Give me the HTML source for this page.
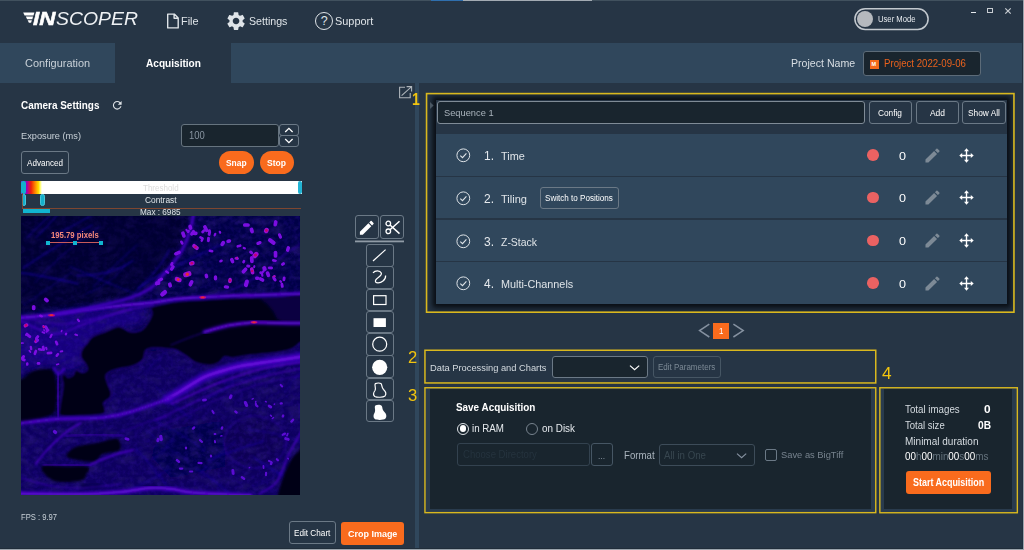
<!DOCTYPE html>
<html lang="en"><head><meta charset="utf-8"><title>Inscoper - Acquisition</title>
<style>
html,body{margin:0;padding:0;}
body{width:1024px;height:550px;overflow:hidden;background:#263545;position:relative;font-family:"Liberation Sans",sans-serif;color:#fff;}
.a{position:absolute;box-sizing:border-box;}
.t{position:absolute;white-space:nowrap;transform-origin:0 50%;line-height:1;}
.b{font-weight:700;}
.btn{position:absolute;box-sizing:border-box;border:1px solid #6b7986;border-radius:3px;}
.dk{background:#19252e;}
.yb{position:absolute;box-sizing:border-box;border:1px solid #d9b91c;}
svg{position:absolute;overflow:visible;}
</style></head><body>
<!-- TOPBAR -->
<div class="a" style="left:0;top:0;width:1024px;height:1px;background:#41515e"></div>
<div class="a" style="left:431px;top:0;width:32px;height:1px;background:#2f6fae"></div>
<div class="a" style="left:463px;top:0;width:129px;height:1px;background:#a3abb3"></div>
<svg style="left:0;top:0" width="60" height="40" viewBox="0 0 60 40"><g fill="#fff"><polygon points="23.2,12.4 34.4,12.4 33.5,15.4 24.6,15.4"></polygon><polygon points="25.8,16.4 33.1,16.4 32.3,19.2 27.1,19.2"></polygon><polygon points="27.7,20.2 31.9,20.2 31.1,22.8 28.9,22.8"></polygon></g></svg>
<div class="a" style="left:0;top:0;width:150px;height:40px"><span class="t b" style="left: 33.4px; font-style: italic; color: rgb(255, 255, 255); -webkit-text-stroke: 0.5px rgb(255, 255, 255); font-size: 17.5px; top: 11px; transform: scaleX(1.28);">IN</span><span class="t" style="left: 56px; font-style: italic; color: rgb(238, 241, 244); font-size: 17.5px; top: 11px; transform: scaleX(1.109);">SCOPER</span></div>

<svg style="left:166px;top:12px" width="14" height="18" viewBox="0 0 14 18"><path d="M1.7 2.1h6.6l3.9 3.9v9.9h-10.5z M8.1 2.1v4.1h4.1" fill="none" stroke="#dfe4e8" stroke-width="1.4" stroke-linejoin="round"></path></svg>
<span class="t" style="left: 181px; color: rgb(223, 228, 232); font-size: 10.49px; top: 17px; transform: scaleX(1.04);">File</span>
<svg style="left:225.4px;top:9.8px" width="22.1" height="22.1" viewBox="0 0 24 24"><path fill="#dfe4e8" d="M19.14 12.94c.04-.3.06-.61.06-.94 0-.32-.02-.64-.07-.94l2.03-1.58a.49.49 0 0 0 .12-.61l-1.92-3.32a.488.488 0 0 0-.59-.22l-2.39.96c-.5-.38-1.03-.7-1.62-.94l-.36-2.54a.484.484 0 0 0-.48-.41h-3.84c-.24 0-.43.17-.47.41l-.36 2.54c-.59.24-1.13.57-1.62.94l-2.39-.96c-.22-.08-.47 0-.59.22L2.74 8.87c-.12.21-.08.47.12.61l2.03 1.58c-.05.3-.09.63-.09.94s.02.64.07.94l-2.03 1.58a.49.49 0 0 0-.12.61l1.92 3.32c.12.22.37.29.59.22l2.39-.96c.5.38 1.03.7 1.62.94l.36 2.54c.05.24.24.41.48.41h3.84c.24 0 .44-.17.47-.41l.36-2.54c.59-.24 1.13-.56 1.62-.94l2.39.96c.22.08.47 0 .59-.22l1.92-3.32c.12-.22.07-.47-.12-.61l-2.01-1.58zM12 15.6c-1.98 0-3.6-1.620-3.6-3.600s1.620-3.600 3.600-3.600 3.600 1.620 3.600 3.600-1.620 3.600-3.600 3.600z"></path></svg>
<span class="t" style="left: 249.2px; color: rgb(223, 228, 232); font-size: 10.22px; top: 17px; transform: scaleX(1.04);">Settings</span>
<div class="a" style="left:315px;top:12px;width:18px;height:18px;border:1px solid #dfe4e8;border-radius:50%"></div>
<span class="t" style="left:320.8px;top:14.6px;font-size:12.5px;color:#dfe4e8">?</span>
<span class="t" style="left: 335.2px; color: rgb(223, 228, 232); font-size: 10.49px; top: 17px; transform: scaleX(1.04);">Support</span>
<svg style="left:853px;top:7px" width="77" height="24" viewBox="0 0 77 24"><rect x="1.900" y="1.800" width="73.200" height="20.600" rx="10.300" fill="none" stroke="#c3c9cf" stroke-width="1.500"></rect></svg>
<div class="a" style="left:857.3px;top:11px;width:16px;height:16px;border-radius:50%;background:#b5b9be"></div>
<span class="t" style="left: 877.5px; color: rgb(230, 234, 238); font-size: 8.16px; top: 16px; transform: scaleX(0.94);">User Mode</span>
<div class="a" style="left:970.5px;top:12px;width:5px;height:1.2px;background:#e6eaee"></div>
<div class="a" style="left:987px;top:7.800px;width:6.200px;height:5px;border:1px solid #c8cdd2;border-top-width:1.800px"></div>
<svg style="left:1005px;top:7.5px" width="6" height="6" viewBox="0 0 6 6"><path d="M0.300 0.300L5.700 5.700M5.700 0.300L0.300 5.700" stroke="#c8cdd2" stroke-width="1.200"></path></svg>

<!-- TABBAR -->
<div class="a" style="left:0;top:43px;width:1024px;height:40px;background:#30475c"></div>
<div class="a" style="left:115px;top:43px;width:116px;height:40px;background:#263545"></div>
<span class="t" style="left: 24.8px; color: rgb(201, 209, 216); font-size: 11.66px; top: 57px; transform: scaleX(0.94);">Configuration</span>
<span class="t b" style="left: 145.6px; color: rgb(255, 255, 255); font-size: 11.48px; top: 58px; transform: scaleX(0.88);">Acquisition</span>
<span class="t" style="left: 790.8px; color: rgb(217, 223, 228); font-size: 10.29px; top: 59px; transform: scaleX(1.03);">Project Name</span>
<div class="a dk" style="left:863px;top:51px;width:118px;height:25px;border:1px solid #5c6b78;border-radius:3px"></div>
<div class="a" style="left:869.5px;top:59.5px;width:9.5px;height:9.5px;background:#f26a1b"></div>
<span class="t b" style="left:871.6px;top:61.6px;font-size:5.5px;color:#fff">M</span>
<span class="t" style="left: 883.6px; color: rgb(233, 98, 29); font-size: 10.26px; top: 59px; transform: scaleX(0.94);">Project 2022-09-06</span>

<!-- LEFT PANEL -->
<span class="t b" style="left: 21px; color: rgb(255, 255, 255); font-size: 11.3px; top: 100px; transform: scaleX(0.88);">Camera Settings</span>
<svg style="left:112px;top:100.3px" width="10.5" height="10.5" viewBox="0 0 24 24"><path fill="#dfe4e8" d="M17.65 6.35A7.958 7.958 0 0 0 12 4c-4.42 0-7.990 3.580-7.990 8s3.570 8 7.990 8c3.730 0 6.840-2.550 7.730-6h-2.080A5.990 5.990 0 0 1 12 18c-3.310 0-6-2.690-6-6s2.690-6 6-6c1.660 0 3.140.69 4.220 1.780L13 11h7V4l-2.350 2.350z" transform="translate(12 12) scale(1.25) translate(-12 -12)"></path></svg>
<span class="t" style="left: 21px; color: rgb(201, 209, 216); font-size: 9.82px; top: 131px; transform: scaleX(0.94);">Exposure (ms)</span>
<div class="a dk" style="left:181px;top:124px;width:98px;height:23px;border:1px solid #66747f;border-radius:3px"></div>
<span class="t" style="left: 188.6px; color: rgb(135, 148, 160); font-size: 10.07px; top: 131px; transform: scaleX(0.94);">100</span>
<div class="btn" style="left:279px;top:124px;width:20px;height:12px"></div>
<div class="btn" style="left:279px;top:135px;width:20px;height:12px"></div>
<svg style="left:279px;top:124px" width="20" height="23" viewBox="0 0 20 23"><path d="M6.2 8L9.9 4.3L13.6 8M6.2 15L9.9 18.7L13.6 15" fill="none" stroke="#fff" stroke-width="1.3"></path></svg>
<div class="btn" style="left:21px;top:151px;width:47.5px;height:22.5px"></div>
<span class="t" style="left: 27px; color: rgb(255, 255, 255); font-size: 8.61px; top: 159px; transform: scaleX(0.94);">Advanced</span>
<div class="a" style="left:218.5px;top:151px;width:35px;height:23px;border-radius:11.5px;background:#f96b1d"></div>
<span class="t b" style="left: 225.8px; color: rgb(255, 255, 255); font-size: 9.57px; top: 158px; transform: scaleX(0.88);">Snap</span>
<div class="a" style="left:259.5px;top:151px;width:34.5px;height:23px;border-radius:11.5px;background:#f96b1d"></div>
<span class="t b" style="left: 267.3px; color: rgb(255, 255, 255); font-size: 9.72px; top: 158px; transform: scaleX(0.88);">Stop</span>
<!-- threshold -->
<div class="a" style="left:21px;top:181px;width:281px;height:12.5px;background:linear-gradient(90deg,#7a10d8 0,#8c00cc 5px,#c80870 7.500px,#ee2008 10px,#ff8400 14px,#ffdc00 17.500px,#ffff80 19.500px,#fff 21px,#fff 100%)"></div>
<span class="t" style="left: 143.2px; color: rgb(220, 220, 220); font-size: 8.52px; top: 184px; transform: scaleX(0.94);">Threshold</span>
<div class="a" style="left:21.400px;top:181px;width:4.200px;height:13px;border-radius:2.100px;background:#12b0cc"></div>
<div class="a" style="left:298px;top:181px;width:4px;height:13px;border-radius:2px;background:#22b4d4"></div>
<span class="t" style="left: 145.2px; color: rgb(223, 228, 232); font-size: 8.89px; top: 196px; transform: scaleX(0.94);">Contrast</span>
<div class="a" style="left:21.500px;top:194px;width:4.400px;height:12.400px;border-radius:2.200px;background:#14b0cc;border:1px solid #48c4da"></div>
<div class="a" style="left:40.300px;top:194px;width:4.400px;height:12.400px;border-radius:2.200px;background:#14b0cc;border:1px solid #48c4da"></div>
<div class="a" style="left:21.500px;top:208px;width:279px;height:1px;background:#7e4630"></div>
<div class="a" style="left:21.500px;top:193px;width:1px;height:16px;background:#8f4a2e;opacity:.75"></div>
<div class="a" style="left:23px;top:209px;width:26.5px;height:4px;background:#11b5d0"></div>
<span class="t" style="left: 140.3px; color: rgb(223, 228, 232); font-size: 8.73px; top: 208px; transform: scaleX(0.94);">Max : 6985</span>
<svg style="left:21px;top:216px;overflow:hidden" width="279" height="279" viewBox="0 0 279 279">
<defs>
<filter id="b1" x="-20%" y="-20%" width="140%" height="140%"><feGaussianBlur stdDeviation="0.85"></feGaussianBlur></filter>
<filter id="b2" x="-20%" y="-20%" width="140%" height="140%"><feGaussianBlur stdDeviation="1.6"></feGaussianBlur></filter>
<filter id="b4" x="-30%" y="-30%" width="160%" height="160%"><feGaussianBlur stdDeviation="4"></feGaussianBlur></filter>
<filter id="nz" x="0" y="0" width="100%" height="100%"><feTurbulence type="fractalNoise" baseFrequency="0.22" numOctaves="3" seed="4"></feTurbulence><feColorMatrix type="matrix" values="0 0 0 0 0.07  0 0 0 0 0.01  0 0 0 0 0.72  2.8 0 0 0 -1.1"></feColorMatrix></filter>
<filter id="nz2" x="0" y="0" width="100%" height="100%"><feTurbulence type="turbulence" baseFrequency="0.06 0.1" numOctaves="2" seed="9"></feTurbulence><feColorMatrix type="matrix" values="0 0 0 0 0.02  0 0 0 0 0.01  0 0 0 0 0.16  0 2.2 0 0 -0.35"></feColorMatrix></filter>
<clipPath id="cp"><rect width="279" height="279"></rect></clipPath>
</defs>
<g clip-path="url(#cp)">
<rect width="279" height="279" fill="#040042"></rect>
<g filter="url(#b4)">
<path d="M-10.0 -10.0L172.0 -10.0L165.0 25.0L150.0 50.0L128.0 72.0L100.0 85.0L60.0 93.0L-10.0 100.0Z" fill="#020030"></path>
<path d="M176.0 -10.0L290.0 -10.0L290.0 78.0L211.0 78.0L156.0 81.0L132.0 86.0L132.0 74.0L153.0 52.0L168.0 27.0Z" fill="#050046"></path>
<path d="M-10.0 102.0L60.0 95.0L127.0 88.0L127.0 94.0L122.0 109.0L97.0 115.0L76.0 120.0L66.0 140.0L62.0 152.0L45.0 158.0L33.0 150.0L10.0 154.0L-10.0 160.0Z" fill="#12007e"></path>
<path d="M-10.0 206.0L36.0 204.0L82.0 202.0L84.0 160.0L94.0 154.0L112.0 150.0L125.0 135.0L148.0 133.0L170.0 141.0L176.0 148.0L193.0 149.0L204.0 141.0L238.0 139.0L271.0 133.0L290.0 124.0L290.0 290.0L-10.0 290.0Z" fill="#08005e"></path>
<ellipse cx="234" cy="226" rx="30" ry="25" fill="#070054"></ellipse>
<path d="M140.0 215.0L200.0 205.0L205.0 250.0L150.0 262.0L130.0 240.0Z" fill="#06004c"></path>
</g>
<rect width="279" height="279" filter="url(#nz2)" opacity="0.5"></rect>
<rect width="279" height="279" filter="url(#nz)" opacity="0.14"></rect>
<path d="M-10.0 -10.0L165.0 -10.0L158.0 25.0L143.0 48.0L122.0 68.0L95.0 80.0L55.0 88.0L-10.0 94.0Z" fill="#020030" opacity="0.5" filter="url(#b4)"></path>
<path d="M48.8 50.4Q82.5 65.7 115.8 78.2" fill="none" stroke="#1402a0" stroke-width="1.2" opacity="0.53" filter="url(#b1)"></path>
<path d="M71.9 71.4Q87.4 55.0 115.9 28.8" fill="none" stroke="#1402a0" stroke-width="1.7" opacity="0.36" filter="url(#b1)"></path>
<path d="M117.7 86.8Q153.7 79.7 200.8 88.1" fill="none" stroke="#1402a0" stroke-width="1.5" opacity="0.37" filter="url(#b1)"></path>
<path d="M14.7 21.8Q37.5 -0.2 62.1 -33.0" fill="none" stroke="#1402a0" stroke-width="1.5" opacity="0.57" filter="url(#b1)"></path>
<path d="M55.0 59.6Q91.7 59.9 112.4 44.3" fill="none" stroke="#1402a0" stroke-width="1.8" opacity="0.60" filter="url(#b1)"></path>
<path d="M31.0 20.7Q55.0 8.4 70.5 -0.7" fill="none" stroke="#1402a0" stroke-width="1.8" opacity="0.49" filter="url(#b1)"></path>
<path d="M114.5 76.3Q138.1 54.4 148.6 33.5" fill="none" stroke="#1402a0" stroke-width="2.0" opacity="0.49" filter="url(#b1)"></path>
<path d="M-0.5 56.7Q21.8 59.5 57.3 67.8" fill="none" stroke="#1402a0" stroke-width="2.0" opacity="0.62" filter="url(#b1)"></path>
<path d="M5.3 22.2Q26.1 1.8 37.4 -8.2" fill="none" stroke="#1402a0" stroke-width="1.6" opacity="0.51" filter="url(#b1)"></path>
<path d="M14.8 65.9Q40.7 36.7 78.9 10.0" fill="none" stroke="#1402a0" stroke-width="1.2" opacity="0.44" filter="url(#b1)"></path>
<path d="M116.2 72.3Q156.9 47.3 206.9 25.8" fill="none" stroke="#1402a0" stroke-width="1.9" opacity="0.57" filter="url(#b1)"></path>
<path d="M3.0 89.0Q31.3 69.9 50.9 56.2" fill="none" stroke="#1402a0" stroke-width="1.3" opacity="0.38" filter="url(#b1)"></path>
<path d="M1.7 52.4Q34.4 29.9 71.3 8.9" fill="none" stroke="#1402a0" stroke-width="2.0" opacity="0.52" filter="url(#b1)"></path>
<path d="M64.7 78.0Q91.5 67.8 105.3 47.5" fill="none" stroke="#1402a0" stroke-width="1.2" opacity="0.42" filter="url(#b1)"></path>
<path d="M232.4 271.3Q261.7 257.5 281.9 241.2" fill="none" stroke="#1c04a8" stroke-width="1.4" opacity="0.33" filter="url(#b1)"></path>
<path d="M106.9 274.2Q125.5 267.1 149.9 252.3" fill="none" stroke="#1c04a8" stroke-width="1.6" opacity="0.39" filter="url(#b1)"></path>
<path d="M131.4 242.9Q142.5 236.9 152.2 222.5" fill="none" stroke="#1c04a8" stroke-width="1.6" opacity="0.38" filter="url(#b1)"></path>
<path d="M264.2 176.3Q273.5 159.3 284.0 152.8" fill="none" stroke="#1c04a8" stroke-width="1.2" opacity="0.41" filter="url(#b1)"></path>
<path d="M202.4 167.0Q235.2 162.0 256.4 153.3" fill="none" stroke="#1c04a8" stroke-width="1.7" opacity="0.48" filter="url(#b1)"></path>
<path d="M125.1 154.5Q145.8 138.6 161.6 111.5" fill="none" stroke="#1c04a8" stroke-width="1.0" opacity="0.49" filter="url(#b1)"></path>
<path d="M186.3 244.2Q209.6 235.2 243.1 225.0" fill="none" stroke="#1c04a8" stroke-width="1.7" opacity="0.57" filter="url(#b1)"></path>
<path d="M231.9 240.8Q254.6 257.3 280.8 269.3" fill="none" stroke="#1c04a8" stroke-width="1.9" opacity="0.56" filter="url(#b1)"></path>
<path d="M174.7 252.0Q193.2 263.6 208.7 278.1" fill="none" stroke="#1c04a8" stroke-width="1.6" opacity="0.48" filter="url(#b1)"></path>
<path d="M114.4 232.5Q134.5 252.6 149.2 275.3" fill="none" stroke="#1c04a8" stroke-width="1.7" opacity="0.47" filter="url(#b1)"></path>
<path d="M178.9 258.1Q191.5 242.3 215.5 224.1" fill="none" stroke="#1c04a8" stroke-width="1.5" opacity="0.37" filter="url(#b1)"></path>
<path d="M225.0 214.1Q249.9 214.1 280.6 225.8" fill="none" stroke="#1c04a8" stroke-width="1.3" opacity="0.50" filter="url(#b1)"></path>
<path d="M136.3 171.9Q152.8 192.1 170.8 202.8" fill="none" stroke="#1c04a8" stroke-width="1.3" opacity="0.50" filter="url(#b1)"></path>
<path d="M135.5 205.6Q164.2 219.0 183.7 235.2" fill="none" stroke="#1c04a8" stroke-width="1.6" opacity="0.39" filter="url(#b1)"></path>
<path d="M124.4 214.0Q149.1 234.8 168.7 244.8" fill="none" stroke="#1c04a8" stroke-width="1.3" opacity="0.35" filter="url(#b1)"></path>
<path d="M180.7 185.5Q198.1 176.4 212.5 167.5" fill="none" stroke="#1c04a8" stroke-width="1.3" opacity="0.55" filter="url(#b1)"></path>
<g filter="url(#b1)" fill="#030119">
<path d="M129.8 91.5C131.6 89.9 137.6 89.0 142.0 88.0C146.4 87.0 149.7 86.1 156.3 85.4C162.9 84.7 172.6 84.3 181.7 83.7C190.8 83.1 201.8 82.4 210.8 82.0C219.9 81.6 227.8 81.5 236.0 81.2C244.2 81.0 251.8 80.8 260.0 80.5C268.2 80.2 280.8 72.2 285.0 79.5C289.2 86.8 286.0 116.1 285.0 124.0C284.0 131.9 281.3 125.5 279.0 127.0C276.7 128.5 274.8 131.4 271.0 133.0C267.2 134.6 261.5 135.8 256.0 136.7C250.5 137.6 243.4 137.9 238.0 138.5C232.6 139.1 228.0 139.4 223.5 140.0C219.0 140.6 214.3 141.8 211.0 142.0C207.7 142.2 205.7 140.2 203.5 141.0C201.3 141.8 200.4 145.3 198.0 146.7C195.6 148.1 192.9 149.5 189.0 149.5C185.1 149.5 178.5 148.3 174.5 146.7C170.5 145.1 168.1 142.0 165.0 140.0C161.9 138.0 158.9 135.7 156.0 134.5C153.1 133.3 151.5 133.4 147.6 133.0C143.7 132.6 136.1 131.9 132.3 132.2C128.5 132.5 126.4 132.8 124.7 134.7C123.0 136.6 124.3 141.0 122.2 143.6C120.1 146.2 116.7 148.3 112.0 150.0C107.3 151.7 98.7 152.3 94.2 153.8C89.8 155.3 86.6 156.8 85.3 158.9C84.0 161.0 85.7 163.5 86.5 166.5C87.3 169.5 90.0 174.1 90.4 176.7C90.8 179.2 90.3 180.1 89.0 181.8C87.7 183.5 83.5 185.2 82.7 186.9C81.9 188.6 84.2 190.1 84.0 192.0C83.8 193.9 86.9 197.0 81.4 198.4C75.9 199.8 58.0 200.4 50.9 200.6C43.8 200.8 40.9 201.0 38.9 199.6C36.9 198.2 38.4 195.0 38.6 192.0C38.8 189.0 39.6 185.6 40.2 181.8C40.8 178.0 41.9 172.4 42.0 169.0C42.1 165.6 40.5 163.3 40.7 161.4C40.9 159.5 42.2 157.6 43.3 157.6C44.3 157.6 45.5 161.2 47.0 161.4C48.5 161.6 50.9 160.2 52.2 158.9C53.5 157.6 53.2 154.2 54.7 153.8C56.2 153.4 59.1 156.4 61.0 156.4C62.9 156.4 65.5 155.1 66.2 153.8C66.9 152.5 66.0 150.8 64.9 148.7C63.8 146.6 60.4 143.6 59.8 141.0C59.1 138.4 59.9 135.7 61.0 133.4C62.1 131.1 64.5 129.1 66.2 127.0C67.9 124.9 68.3 122.6 71.3 120.7C74.3 118.8 79.8 117.3 84.0 115.6C88.2 113.9 93.7 111.1 96.7 110.5C99.7 109.9 99.7 111.0 101.8 111.8C103.9 112.6 106.4 115.2 109.4 115.6C112.4 116.0 116.8 115.7 119.6 114.4C122.4 113.1 124.1 110.8 126.0 108.0C127.9 105.2 130.4 100.5 131.0 97.8C131.6 95.0 128.0 93.1 129.8 91.5Z"></path>
<path d="M-3.0 169.0C-1.9 161.6 1.2 163.7 3.8 161.4C6.4 159.1 9.1 156.3 12.7 155.0C16.3 153.7 22.3 153.3 25.5 153.3C28.7 153.3 30.3 153.2 31.8 155.0C33.3 156.8 33.8 160.4 34.4 164.0C35.0 167.6 35.6 172.5 35.6 176.7C35.6 180.9 35.0 186.3 34.6 189.4C34.2 192.5 34.7 193.7 33.5 195.5C32.3 197.3 30.5 198.6 27.3 200.0C24.1 201.4 19.6 203.1 14.5 204.0C9.4 204.9 -0.1 211.4 -3.0 205.6C-5.9 199.8 -4.1 176.4 -3.0 169.0Z"></path>
<path d="M45.5 240.0C45.5 237.9 49.4 233.2 54.5 231.0C59.6 228.8 69.3 228.4 76.0 227.0C82.7 225.6 90.7 222.7 94.5 222.7C98.3 222.7 98.4 225.0 99.0 227.0C99.6 229.0 100.8 232.7 98.0 234.5C95.2 236.3 86.2 236.2 82.0 238.0C77.8 239.8 77.3 244.6 72.7 245.5C68.1 246.4 59.0 244.5 54.5 243.6C50.0 242.7 45.5 242.1 45.5 240.0Z"></path>
<path d="M22.0 250.0C25.6 248.8 37.5 250.3 45.0 250.5C52.5 250.7 63.6 249.8 67.0 251.0C70.4 252.2 66.7 255.8 65.5 258.0C64.3 260.2 64.9 263.2 60.0 264.5C55.1 265.8 42.1 266.6 36.0 265.5C29.9 264.4 25.9 260.6 23.6 258.0C21.3 255.4 18.4 251.2 22.0 250.0Z"></path>
<path d="M258.0 285.0C254.2 281.2 260.0 268.8 262.0 262.0C264.0 255.2 267.5 248.3 270.0 244.0C272.5 239.7 274.5 238.3 277.0 236.0C279.5 233.7 283.7 221.8 285.0 230.0C286.3 238.2 289.5 275.8 285.0 285.0C280.5 294.2 261.8 288.8 258.0 285.0Z"></path>
</g>
<path d="M238.0 82.0L285.0 80.0L285.0 106.0L262.0 106.0L256.0 103.0L252.0 95.0L246.0 88.0Z" fill="#08004a" opacity="0.85" filter="url(#b2)"></path>
<path d="M60.0 268.0L80.0 268.0L80.0 273.0L60.0 273.0Z" fill="#06003c" opacity="0.7" filter="url(#b2)"></path>
<path d="M-2.0 102.0C3.3 101.5 19.2 100.3 30.0 99.0C40.8 97.7 51.3 95.9 63.0 94.3C74.7 92.7 89.0 90.7 100.0 89.5C111.0 88.3 119.7 88.1 129.0 87.0C138.3 85.9 147.2 84.0 156.0 83.0C164.8 82.0 172.8 81.8 182.0 81.3C191.2 80.8 201.7 80.0 211.0 79.7C220.3 79.4 226.2 79.6 238.0 79.2C249.8 78.8 274.7 77.9 282.0 77.6" fill="none" stroke="#3206b4" stroke-width="4.5" opacity="0.55" filter="url(#b2)" stroke-linecap="round"></path>
<path d="M-2.0 102.0C3.3 101.5 19.2 100.3 30.0 99.0C40.8 97.7 51.3 95.9 63.0 94.3C74.7 92.7 89.0 90.7 100.0 89.5C111.0 88.3 119.7 88.1 129.0 87.0C138.3 85.9 147.2 84.0 156.0 83.0C164.8 82.0 172.8 81.8 182.0 81.3C191.2 80.8 201.7 80.0 211.0 79.7C220.3 79.4 226.2 79.6 238.0 79.2C249.8 78.8 274.7 77.9 282.0 77.6" fill="none" stroke="#6c0ce0" stroke-width="2.1" opacity="1.00" filter="url(#b1)" stroke-linecap="round"></path>
<path d="M-2.0 104.0C3.8 106.3 22.1 117.3 33.0 118.0C43.9 118.7 52.1 111.8 63.6 108.0C75.1 104.2 90.4 98.5 101.8 95.3C113.2 92.1 127.0 90.0 132.0 89.0" fill="none" stroke="#4a06c6" stroke-width="1.4" opacity="0.90" filter="url(#b1)" stroke-linecap="round"></path>
<path d="M-2.0 100.0C5.0 101.3 26.3 107.8 40.0 108.0C53.7 108.2 68.3 103.5 80.0 101.0C91.7 98.5 105.0 94.3 110.0 93.0" fill="none" stroke="#4a06c6" stroke-width="1.2" opacity="0.70" filter="url(#b1)" stroke-linecap="round"></path>
<path d="M183.5 116.0C187.1 115.0 197.8 111.5 205.0 110.0C212.2 108.5 222.3 107.5 227.0 106.9C231.7 106.3 228.2 106.3 233.0 106.3C237.8 106.3 247.8 106.8 256.0 106.9C264.2 107.1 277.7 107.2 282.0 107.2" fill="none" stroke="#3206b4" stroke-width="5.0" opacity="0.55" filter="url(#b2)" stroke-linecap="round"></path>
<path d="M183.5 116.0C187.1 115.0 197.8 111.5 205.0 110.0C212.2 108.5 222.3 107.5 227.0 106.9C231.7 106.3 228.2 106.3 233.0 106.3C237.8 106.3 247.8 106.8 256.0 106.9C264.2 107.1 277.7 107.2 282.0 107.2" fill="none" stroke="#6a0ade" stroke-width="2.0" opacity="1.00" filter="url(#b1)" stroke-linecap="round"></path>
<path d="M150.0 129.0C153.3 127.7 164.0 123.2 170.0 121.0C176.0 118.8 183.3 116.4 186.0 115.5" fill="none" stroke="#2a02a0" stroke-width="1.0" opacity="0.80" filter="url(#b1)" stroke-linecap="round"></path>
<path d="M172.6 -2.0C172.0 0.8 170.8 8.7 169.0 14.5C167.2 20.3 164.7 27.0 161.7 32.7C158.7 38.5 154.8 43.9 150.8 49.0C146.9 54.1 141.6 59.6 138.0 63.6C134.4 67.5 133.8 69.6 129.0 72.7C124.2 75.8 118.4 79.0 109.0 82.0C99.6 85.0 84.9 88.3 72.7 91.0C60.5 93.7 42.1 96.8 36.0 98.0" fill="none" stroke="#2a04a4" stroke-width="5.0" opacity="0.50" filter="url(#b2)" stroke-linecap="round"></path>
<path d="M172.6 -2.0C172.0 0.8 170.8 8.7 169.0 14.5C167.2 20.3 164.7 27.0 161.7 32.7C158.7 38.5 154.8 43.9 150.8 49.0C146.9 54.1 141.6 59.6 138.0 63.6C134.4 67.5 133.8 69.6 129.0 72.7C124.2 75.8 118.4 79.0 109.0 82.0C99.6 85.0 84.9 88.3 72.7 91.0C60.5 93.7 42.1 96.8 36.0 98.0" fill="none" stroke="#4a06c6" stroke-width="2.0" opacity="0.95" filter="url(#b1)" stroke-linecap="round"></path>
<path d="M279.0 28.0C276.2 30.0 268.5 35.0 262.0 40.0C255.5 45.0 247.8 52.7 240.0 58.0C232.2 63.3 223.3 68.3 215.0 72.0C206.7 75.7 194.2 78.7 190.0 80.0" fill="none" stroke="#3404b0" stroke-width="1.2" opacity="0.70" filter="url(#b1)" stroke-linecap="round"></path>
<path d="M146.0 183.0C148.3 181.7 153.8 178.7 160.0 175.0C166.2 171.3 175.8 164.6 183.5 161.0C191.2 157.4 199.9 155.3 206.0 153.5C212.1 151.7 211.7 151.5 220.0 150.0C228.3 148.5 245.7 146.1 256.0 144.5C266.3 142.9 277.7 141.2 282.0 140.5" fill="none" stroke="#3606b8" stroke-width="10.0" opacity="0.80" filter="url(#b2)" stroke-linecap="round"></path>
<path d="M146.0 183.0C148.3 181.7 153.8 178.7 160.0 175.0C166.2 171.3 175.8 164.6 183.5 161.0C191.2 157.4 199.9 155.3 206.0 153.5C212.1 151.7 211.7 151.5 220.0 150.0C228.3 148.5 245.7 146.1 256.0 144.5C266.3 142.9 277.7 141.2 282.0 140.5" fill="none" stroke="#6a0ade" stroke-width="3.2" opacity="1.00" filter="url(#b1)" stroke-linecap="round"></path>
<path d="M150.0 188.0C153.3 186.5 161.7 182.7 170.0 179.0C178.3 175.3 188.3 170.3 200.0 166.0C211.7 161.7 226.3 156.3 240.0 153.0C253.7 149.7 275.0 147.2 282.0 146.0" fill="none" stroke="#5808d2" stroke-width="1.5" opacity="0.90" filter="url(#b1)" stroke-linecap="round"></path>
<path d="M135.0 204.0C140.0 201.7 153.3 195.3 165.0 190.0C176.7 184.7 191.7 177.0 205.0 172.0C218.3 167.0 232.2 163.3 245.0 160.0C257.8 156.7 275.8 153.3 282.0 152.0" fill="none" stroke="#4a06c6" stroke-width="1.3" opacity="0.80" filter="url(#b1)" stroke-linecap="round"></path>
<path d="M129.0 214.0C134.2 211.8 148.2 206.3 160.0 201.0C171.8 195.7 186.7 187.5 200.0 182.0C213.3 176.5 226.3 171.8 240.0 168.0C253.7 164.2 275.0 160.5 282.0 159.0" fill="none" stroke="#3a04b8" stroke-width="1.0" opacity="0.70" filter="url(#b1)" stroke-linecap="round"></path>
<path d="M-2.0 207.4C4.3 206.7 22.0 204.0 36.0 203.0C50.0 202.0 69.8 202.6 82.0 201.4C94.2 200.2 97.7 199.2 109.0 196.0C120.3 192.8 143.2 184.3 150.0 182.0" fill="none" stroke="#3004b0" stroke-width="5.0" opacity="0.60" filter="url(#b2)" stroke-linecap="round"></path>
<path d="M-2.0 207.4C4.3 206.7 22.0 204.0 36.0 203.0C50.0 202.0 69.8 202.6 82.0 201.4C94.2 200.2 97.7 199.2 109.0 196.0C120.3 192.8 143.2 184.3 150.0 182.0" fill="none" stroke="#5608d0" stroke-width="2.0" opacity="1.00" filter="url(#b1)" stroke-linecap="round"></path>
<path d="M37.6 157.0C37.5 159.2 37.3 165.3 37.2 170.0C37.1 174.7 36.9 179.8 37.0 185.0C37.1 190.2 37.5 198.3 37.6 201.0" fill="none" stroke="#4a06c6" stroke-width="1.8" opacity="1.00" filter="url(#b1)" stroke-linecap="round"></path>
<path d="M33.0 152.0C33.8 153.0 35.8 157.8 37.5 158.0C39.2 158.2 42.1 153.8 43.0 153.0" fill="none" stroke="#3a04b8" stroke-width="3.0" opacity="0.90" filter="url(#b1)" stroke-linecap="round"></path>
<path d="M-2.0 277.5C8.3 277.6 43.0 278.4 60.0 278.2C77.0 277.9 88.5 277.0 100.0 276.0C111.5 275.0 120.5 272.5 129.0 272.0C137.5 271.5 143.7 272.2 151.0 273.0C158.3 273.8 159.4 275.5 172.6 276.6C185.8 277.7 220.4 279.0 230.0 279.5" fill="none" stroke="#3004b0" stroke-width="6.0" opacity="0.60" filter="url(#b2)" stroke-linecap="round"></path>
<path d="M-2.0 277.5C8.3 277.6 43.0 278.4 60.0 278.2C77.0 277.9 88.5 277.0 100.0 276.0C111.5 275.0 120.5 272.5 129.0 272.0C137.5 271.5 143.7 272.2 151.0 273.0C158.3 273.8 159.4 275.5 172.6 276.6C185.8 277.7 220.4 279.0 230.0 279.5" fill="none" stroke="#640ad8" stroke-width="2.4" opacity="1.00" filter="url(#b1)" stroke-linecap="round"></path>
<path d="M14.5 248.0C16.6 245.5 21.8 238.3 27.0 233.0C32.2 227.7 40.0 220.3 45.5 216.0C51.0 211.7 57.6 208.5 60.0 207.0" fill="none" stroke="#4a06c6" stroke-width="1.6" opacity="0.95" filter="url(#b1)" stroke-linecap="round"></path>
<path d="M22.0 248.6C25.8 248.7 37.2 248.8 45.0 249.0C52.8 249.2 65.0 249.5 69.0 249.6" fill="none" stroke="#4a06c6" stroke-width="1.3" opacity="0.90" filter="url(#b1)" stroke-linecap="round"></path>
<path d="M45.0 220.0C49.7 219.7 63.5 218.5 73.0 218.4C82.5 218.3 97.2 219.2 102.0 219.4" fill="none" stroke="#4a06c6" stroke-width="1.3" opacity="0.85" filter="url(#b1)" stroke-linecap="round"></path>
<path d="M0.0 262.0C5.0 263.3 20.0 268.3 30.0 270.0C40.0 271.7 48.3 272.3 60.0 272.0C71.7 271.7 93.3 268.7 100.0 268.0" fill="none" stroke="#3a04b8" stroke-width="1.2" opacity="0.80" filter="url(#b1)" stroke-linecap="round"></path>
<path d="M69.0 249.0C70.8 248.2 75.5 245.8 80.0 244.0C84.5 242.2 90.7 239.7 96.0 238.0C101.3 236.3 109.3 234.7 112.0 234.0" fill="none" stroke="#4a06c6" stroke-width="2.2" opacity="0.85" filter="url(#b1)" stroke-linecap="round"></path>
<path d="M282.0 213.0C279.7 217.2 271.5 231.0 268.0 238.0C264.5 245.0 263.3 250.0 261.0 255.0C258.7 260.0 257.8 264.2 254.0 268.0C250.2 271.8 240.7 276.3 238.0 278.0" fill="none" stroke="#4a06c6" stroke-width="1.6" opacity="0.90" filter="url(#b1)" stroke-linecap="round"></path>
<path d="M100.0 216.0C105.0 214.2 121.7 207.7 130.0 205.0C138.3 202.3 146.7 200.8 150.0 200.0" fill="none" stroke="#3a04b8" stroke-width="1.0" opacity="0.70" filter="url(#b1)" stroke-linecap="round"></path>
<ellipse cx="234" cy="226" rx="31" ry="26" fill="none" stroke="#3206b8" stroke-width="1.200" opacity="0.5" filter="url(#b1)"></ellipse>
<path d="M129.8 91.5C131.6 89.9 137.6 89.0 142.0 88.0C146.4 87.0 149.7 86.1 156.3 85.4C162.9 84.7 172.6 84.3 181.7 83.7C190.8 83.1 201.8 82.4 210.8 82.0C219.9 81.6 227.8 81.5 236.0 81.2C244.2 81.0 251.8 80.8 260.0 80.5C268.2 80.2 280.8 72.2 285.0 79.5C289.2 86.8 286.0 116.1 285.0 124.0C284.0 131.9 281.3 125.5 279.0 127.0C276.7 128.5 274.8 131.4 271.0 133.0C267.2 134.6 261.5 135.8 256.0 136.7C250.5 137.6 243.4 137.9 238.0 138.5C232.6 139.1 228.0 139.4 223.5 140.0C219.0 140.6 214.3 141.8 211.0 142.0C207.7 142.2 205.7 140.2 203.5 141.0C201.3 141.8 200.4 145.3 198.0 146.7C195.6 148.1 192.9 149.5 189.0 149.5C185.1 149.5 178.5 148.3 174.5 146.7C170.5 145.1 168.1 142.0 165.0 140.0C161.9 138.0 158.9 135.7 156.0 134.5C153.1 133.3 151.5 133.4 147.6 133.0C143.7 132.6 136.1 131.9 132.3 132.2C128.5 132.5 126.4 132.8 124.7 134.7C123.0 136.6 124.3 141.0 122.2 143.6C120.1 146.2 116.7 148.3 112.0 150.0C107.3 151.7 98.7 152.3 94.2 153.8C89.8 155.3 86.6 156.8 85.3 158.9C84.0 161.0 85.7 163.5 86.5 166.5C87.3 169.5 90.0 174.1 90.4 176.7C90.8 179.2 90.3 180.1 89.0 181.8C87.7 183.5 83.5 185.2 82.7 186.9C81.9 188.6 84.2 190.1 84.0 192.0C83.8 193.9 86.9 197.0 81.4 198.4C75.9 199.8 58.0 200.4 50.9 200.6C43.8 200.8 40.9 201.0 38.9 199.6C36.9 198.2 38.4 195.0 38.6 192.0C38.8 189.0 39.6 185.6 40.2 181.8C40.8 178.0 41.9 172.4 42.0 169.0C42.1 165.6 40.5 163.3 40.7 161.4C40.9 159.5 42.2 157.6 43.3 157.6C44.3 157.6 45.5 161.2 47.0 161.4C48.5 161.6 50.9 160.2 52.2 158.9C53.5 157.6 53.2 154.2 54.7 153.8C56.2 153.4 59.1 156.4 61.0 156.4C62.9 156.4 65.5 155.1 66.2 153.8C66.9 152.5 66.0 150.8 64.9 148.7C63.8 146.6 60.4 143.6 59.8 141.0C59.1 138.4 59.9 135.7 61.0 133.4C62.1 131.1 64.5 129.1 66.2 127.0C67.9 124.9 68.3 122.6 71.3 120.7C74.3 118.8 79.8 117.3 84.0 115.6C88.2 113.9 93.7 111.1 96.7 110.5C99.7 109.9 99.7 111.0 101.8 111.8C103.9 112.6 106.4 115.2 109.4 115.6C112.4 116.0 116.8 115.7 119.6 114.4C122.4 113.1 124.1 110.8 126.0 108.0C127.9 105.2 130.4 100.5 131.0 97.8C131.6 95.0 128.0 93.1 129.8 91.5Z" fill="none" stroke="#2a04a6" stroke-width="1.2" opacity="0.8" filter="url(#b1)"></path>
<filter id="b0" x="-20%" y="-20%" width="140%" height="140%"><feGaussianBlur stdDeviation="0.6"></feGaussianBlur></filter>
<g filter="url(#b0)" stroke-linecap="round">
<path d="M172.2 17.2L174.8 17.4" stroke="#7c0ce2" stroke-width="3.7"></path>
<path d="M173.2 30.0L175.8 32.0" stroke="#9a0cd6" stroke-width="4.1"></path>
<circle cx="174.5" cy="31.0" r="1.3" fill="#c40670"></circle>
<path d="M171.5 47.1L170.1 47.5" stroke="#9a0cd6" stroke-width="4.4"></path>
<circle cx="170.8" cy="47.3" r="1.4" fill="#c40670"></circle>
<path d="M167.9 57.7L164.7 58.7" stroke="#9a0cd6" stroke-width="5.1"></path>
<circle cx="166.3" cy="58.2" r="1.7" fill="#e62a30"></circle>
<path d="M155.9 63.1L158.5 64.1" stroke="#9a0cd6" stroke-width="4.4"></path>
<circle cx="157.2" cy="63.6" r="1.4" fill="#e62a30"></circle>
<path d="M148.8 68.2L149.2 69.8" stroke="#7c0ce2" stroke-width="3.7"></path>
<path d="M143.9 76.2L141.3 78.4" stroke="#7c0ce2" stroke-width="4.4"></path>
<path d="M170.7 65.9L169.3 68.7" stroke="#7c0ce2" stroke-width="3.7"></path>
<path d="M185.2 59.3L185.6 60.7" stroke="#7c0ce2" stroke-width="3.4"></path>
<path d="M194.5 60.9L194.5 62.7" stroke="#7c0ce2" stroke-width="3.4"></path>
<path d="M209.1 63.7L208.9 65.3" stroke="#9a0cd6" stroke-width="3.7"></path>
<circle cx="209.0" cy="64.5" r="1.2" fill="#c40670"></circle>
<path d="M204.4 70.9L206.4 71.1" stroke="#7c0ce2" stroke-width="3.4"></path>
<path d="M225.9 65.5L224.9 69.1" stroke="#7c0ce2" stroke-width="4.1"></path>
<path d="M224.6 53.3L222.4 55.7" stroke="#7c0ce2" stroke-width="3.7"></path>
<path d="M227.0 9.0L223.8 9.0" stroke="#7c0ce2" stroke-width="3.7"></path>
<path d="M230.5 13.5L231.1 15.5" stroke="#7c0ce2" stroke-width="3.7"></path>
<path d="M245.7 14.0L245.1 15.0" stroke="#9a0cd6" stroke-width="4.4"></path>
<circle cx="245.4" cy="14.5" r="1.4" fill="#c40670"></circle>
<path d="M254.8 6.0L254.2 8.6" stroke="#7c0ce2" stroke-width="3.7"></path>
<path d="M249.0 24.2L252.6 26.8" stroke="#7c0ce2" stroke-width="4.1"></path>
<path d="M235.2 38.3L233.8 39.7" stroke="#9a0cd6" stroke-width="4.8"></path>
<circle cx="234.5" cy="39.0" r="1.5" fill="#c40670"></circle>
<path d="M230.7 41.9L230.9 45.3" stroke="#7c0ce2" stroke-width="3.7"></path>
<path d="M243.3 52.2L243.7 53.2" stroke="#7c0ce2" stroke-width="4.1"></path>
<path d="M254.5 36.5L254.5 39.9" stroke="#7c0ce2" stroke-width="3.7"></path>
<path d="M246.6 57.1L247.4 59.3" stroke="#7c0ce2" stroke-width="3.7"></path>
<path d="M267.4 31.8L266.6 34.2" stroke="#7c0ce2" stroke-width="3.4"></path>
<path d="M239.1 26.5L236.9 27.5" stroke="#7c0ce2" stroke-width="3.1"></path>
<path d="M258.5 18.8L259.5 21.2" stroke="#7c0ce2" stroke-width="3.1"></path>
<path d="M262.5 47.6L261.5 48.4" stroke="#7c0ce2" stroke-width="3.1"></path>
<path d="M219.2 29.7L216.8 30.3" stroke="#7c0ce2" stroke-width="2.7"></path>
<path d="M200.5 44.8L199.5 45.2" stroke="#7c0ce2" stroke-width="2.7"></path>
<path d="M188.8 34.7L191.2 35.3" stroke="#7c0ce2" stroke-width="2.5"></path>
<path d="M181.3 23.4L180.7 24.6" stroke="#7c0ce2" stroke-width="2.5"></path>
<path d="M5.7 109.0L4.3 109.8" stroke="#9a0cd6" stroke-width="3.5"></path>
<circle cx="5.0" cy="109.4" r="1.4" fill="#c40670"></circle>
<path d="M15.8 123.9L14.8 125.5" stroke="#9a0cd6" stroke-width="3.3"></path>
<circle cx="15.3" cy="124.7" r="1.3" fill="#c40670"></circle>
<path d="M24.7 83.4L26.1 84.6" stroke="#7c0ce2" stroke-width="3.7"></path>
<path d="M12.7 90.8L12.7 92.4" stroke="#7c0ce2" stroke-width="3.7"></path>
<path d="M6.4 118.6L8.8 120.6" stroke="#7c0ce2" stroke-width="3.0"></path>
<path d="M24.7 110.7L26.1 113.3" stroke="#7c0ce2" stroke-width="3.0"></path>
<path d="M35.1 125.8L36.1 128.2" stroke="#7c0ce2" stroke-width="2.7"></path>
<path d="M1.8 143.3L3.2 143.9" stroke="#7c0ce2" stroke-width="3.0"></path>
<path d="M16.8 124.1L16.2 124.9" stroke="#7c0ce2" stroke-width="2.7"></path>
<path d="M19.2 99.7L20.8 100.3" stroke="#7c0ce2" stroke-width="2.4"></path>
<path d="M30.6 118.8L29.4 121.2" stroke="#7c0ce2" stroke-width="2.2"></path>
<path d="M45.2 117.7L44.8 118.3" stroke="#7c0ce2" stroke-width="2.2"></path>
<path d="M9.8 130.9L10.2 133.1" stroke="#7c0ce2" stroke-width="2.4"></path>
<path d="M184.6 183.9L182.4 184.1" stroke="#5a0ad2" stroke-width="2.7"></path>
<path d="M210.1 179.8L209.3 181.6" stroke="#5a0ad2" stroke-width="3.0"></path>
<path d="M224.4 186.6L225.6 189.4" stroke="#5a0ad2" stroke-width="3.3"></path>
<path d="M173.2 211.4L172.0 212.6" stroke="#5a0ad2" stroke-width="2.4"></path>
<path d="M139.8 220.5L140.2 223.5" stroke="#5a0ad2" stroke-width="3.3"></path>
<path d="M156.1 244.3L157.9 245.7" stroke="#5a0ad2" stroke-width="2.7"></path>
<path d="M177.6 246.9L180.4 247.1" stroke="#5a0ad2" stroke-width="2.4"></path>
<path d="M211.8 254.6L212.2 257.4" stroke="#5a0ad2" stroke-width="3.0"></path>
<path d="M201.2 211.4L200.8 212.6" stroke="#5a0ad2" stroke-width="2.4"></path>
<path d="M264.7 222.6L267.3 223.4" stroke="#5a0ad2" stroke-width="3.0"></path>
<path d="M248.1 190.0L249.9 191.0" stroke="#5a0ad2" stroke-width="2.7"></path>
<path d="M191.4 195.0L192.6 197.0" stroke="#5a0ad2" stroke-width="2.2"></path>
<path d="M214.4 195.5L215.6 196.5" stroke="#5a0ad2" stroke-width="2.4"></path>
<path d="M235.6 189.8L236.4 190.2" stroke="#5a0ad2" stroke-width="2.4"></path>
<path d="M262.2 199.5L261.8 200.5" stroke="#5a0ad2" stroke-width="2.4"></path>
<path d="M179.0 224.2L181.0 225.8" stroke="#5a0ad2" stroke-width="2.2"></path>
<path d="M165.0 231.6L165.0 232.4" stroke="#5a0ad2" stroke-width="2.2"></path>
<path d="M189.9 239.6L190.1 240.4" stroke="#5a0ad2" stroke-width="2.2"></path>
<path d="M220.9 261.2L223.1 262.8" stroke="#5a0ad2" stroke-width="2.4"></path>
<path d="M245.1 256.9L244.9 259.1" stroke="#5a0ad2" stroke-width="2.2"></path>
<path d="M33.5 215.6L34.5 216.4" stroke="#5a0ad2" stroke-width="3.3"></path>
<path d="M104.8 222.6L107.2 223.4" stroke="#5a0ad2" stroke-width="2.7"></path>
<path d="M137.2 223.3L136.8 224.7" stroke="#5a0ad2" stroke-width="3.0"></path>
<path d="M187.5 22.2L187.4 24.8" stroke="#7c0ce2" stroke-width="2.9"></path>
<path d="M248.3 51.9L250.6 52.0" stroke="#7c0ce2" stroke-width="2.9"></path>
<path d="M165.4 13.8L166.0 14.6" stroke="#7c0ce2" stroke-width="2.2"></path>
<path d="M183.9 11.0L185.5 14.3" stroke="#7c0ce2" stroke-width="3.7"></path>
<path d="M252.3 44.4L254.6 44.7" stroke="#7c0ce2" stroke-width="2.6"></path>
<path d="M188.7 14.4L187.3 14.9" stroke="#7c0ce2" stroke-width="2.3"></path>
<path d="M188.7 15.9L188.1 18.4" stroke="#7c0ce2" stroke-width="3.0"></path>
<path d="M208.4 25.0L207.1 25.3" stroke="#7c0ce2" stroke-width="3.5"></path>
<path d="M236.8 62.2L235.8 62.3" stroke="#7c0ce2" stroke-width="3.6"></path>
<path d="M242.7 54.9L241.5 56.4" stroke="#7c0ce2" stroke-width="2.2"></path>
<path d="M239.6 62.9L241.6 64.1" stroke="#7c0ce2" stroke-width="3.5"></path>
<path d="M202.2 26.7L201.2 28.4" stroke="#7c0ce2" stroke-width="3.7"></path>
<path d="M161.9 17.2L162.9 19.9" stroke="#7c0ce2" stroke-width="3.7"></path>
<path d="M214.6 42.4L216.8 42.7" stroke="#7c0ce2" stroke-width="2.4"></path>
<path d="M222.8 32.0L223.8 32.3" stroke="#7c0ce2" stroke-width="2.3"></path>
<path d="M253.5 60.3L252.5 61.1" stroke="#9a0cd6" stroke-width="2.6"></path>
<circle cx="253.0" cy="60.7" r="0.8" fill="#c40670"></circle>
<path d="M179.5 21.4L181.5 22.4" stroke="#7c0ce2" stroke-width="2.7"></path>
<path d="M239.6 56.6L240.8 57.0" stroke="#7c0ce2" stroke-width="2.7"></path>
<path d="M260.9 68.2L261.3 70.4" stroke="#7c0ce2" stroke-width="2.9"></path>
<path d="M198.8 15.8L199.2 16.7" stroke="#7c0ce2" stroke-width="2.2"></path>
<path d="M241.0 57.8L241.4 59.8" stroke="#7c0ce2" stroke-width="2.1"></path>
<path d="M194.3 17.8L193.6 19.4" stroke="#7c0ce2" stroke-width="2.2"></path>
<path d="M263.2 62.0L262.9 63.7" stroke="#7c0ce2" stroke-width="2.9"></path>
<path d="M259.2 65.1L260.1 65.8" stroke="#7c0ce2" stroke-width="2.1"></path>
<path d="M253.0 62.3L254.1 63.9" stroke="#7c0ce2" stroke-width="3.1"></path>
<path d="M229.6 36.0L230.8 36.9" stroke="#7c0ce2" stroke-width="2.9"></path>
<path d="M230.8 53.1L231.6 56.6" stroke="#9a0cd6" stroke-width="3.7"></path>
<circle cx="231.2" cy="54.9" r="1.2" fill="#c40670"></circle>
<path d="M226.7 50.1L227.9 50.2" stroke="#7c0ce2" stroke-width="3.0"></path>
<path d="M216.1 41.8L215.3 42.2" stroke="#9a0cd6" stroke-width="2.3"></path>
<circle cx="215.7" cy="42.0" r="0.7" fill="#c40670"></circle>
<path d="M167.7 14.9L167.1 15.9" stroke="#7c0ce2" stroke-width="2.3"></path>
<path d="M223.0 45.2L222.5 46.2" stroke="#7c0ce2" stroke-width="2.6"></path>
<path d="M182.7 14.8L181.6 16.0" stroke="#7c0ce2" stroke-width="2.7"></path>
<path d="M210.7 43.5L211.6 45.7" stroke="#7c0ce2" stroke-width="3.5"></path>
<path d="M233.4 50.2L233.1 51.1" stroke="#7c0ce2" stroke-width="2.1"></path>
<path d="M172.5 15.6L170.8 18.1" stroke="#7c0ce2" stroke-width="3.3"></path>
<path d="M160.4 25.8L161.2 27.3" stroke="#7c0ce2" stroke-width="2.7"></path>
<path d="M140.6 63.2L138.0 64.6" stroke="#7c0ce2" stroke-width="3.1"></path>
<path d="M136.1 67.2L135.6 68.0" stroke="#7c0ce2" stroke-width="3.0"></path>
<path d="M152.1 50.8L150.6 53.2" stroke="#7c0ce2" stroke-width="3.3"></path>
<path d="M158.1 36.4L154.8 37.8" stroke="#7c0ce2" stroke-width="3.5"></path>
<path d="M137.6 67.1L136.0 67.1" stroke="#7c0ce2" stroke-width="3.7"></path>
<path d="M169.0 10.4L169.6 12.1" stroke="#7c0ce2" stroke-width="3.5"></path>
<path d="M145.2 55.5L147.2 56.7" stroke="#7c0ce2" stroke-width="2.2"></path>
<path d="M151.1 47.4L150.5 48.8" stroke="#7c0ce2" stroke-width="2.8"></path>
<path d="M23.0 114.0L23.6 114.7" stroke="#7c0ce2" stroke-width="1.7"></path>
<path d="M14.9 135.0L13.8 137.8" stroke="#7c0ce2" stroke-width="2.7"></path>
<path d="M27.4 114.2L25.5 115.6" stroke="#7c0ce2" stroke-width="2.2"></path>
<path d="M37.6 148.0L35.7 148.6" stroke="#7c0ce2" stroke-width="1.7"></path>
<path d="M30.1 136.9L26.9 137.1" stroke="#7c0ce2" stroke-width="2.8"></path>
<path d="M37.0 138.1L35.7 139.7" stroke="#7c0ce2" stroke-width="2.5"></path>
<path d="M41.3 135.3L39.7 135.5" stroke="#7c0ce2" stroke-width="2.0"></path>
<path d="M22.1 131.0L22.7 133.6" stroke="#7c0ce2" stroke-width="2.8"></path>
<path d="M56.8 103.5L58.0 105.1" stroke="#7c0ce2" stroke-width="2.1"></path>
<path d="M22.5 110.2L22.9 111.2" stroke="#9a0cd6" stroke-width="2.4"></path>
<circle cx="22.7" cy="110.7" r="1.0" fill="#c40670"></circle>
<path d="M17.0 147.4L18.1 147.4" stroke="#7c0ce2" stroke-width="2.6"></path>
<path d="M6.2 147.5L6.3 148.5" stroke="#7c0ce2" stroke-width="2.6"></path>
<path d="M18.1 133.3L20.8 133.7" stroke="#7c0ce2" stroke-width="2.6"></path>
<path d="M54.3 118.5L56.1 119.1" stroke="#7c0ce2" stroke-width="2.0"></path>
<path d="M8.4 134.7L9.4 136.0" stroke="#7c0ce2" stroke-width="1.9"></path>
<path d="M16.8 120.6L15.4 122.3" stroke="#7c0ce2" stroke-width="2.9"></path>
<path d="M25.1 131.7L25.6 133.1" stroke="#7c0ce2" stroke-width="2.0"></path>
<path d="M21.4 116.2L23.2 116.9" stroke="#7c0ce2" stroke-width="1.9"></path>
<path d="M2.6 140.5L1.4 142.0" stroke="#7c0ce2" stroke-width="2.9"></path>
<path d="M2.1 127.0L0.1 127.1" stroke="#7c0ce2" stroke-width="1.7"></path>
<path d="M40.8 114.6L40.4 115.5" stroke="#7c0ce2" stroke-width="1.6"></path>
<path d="M5.9 117.7L5.1 118.8" stroke="#7c0ce2" stroke-width="2.2"></path>
<path d="M247.9 244.8L250.0 245.8" stroke="#5a0ad2" stroke-width="1.9"></path>
<path d="M200.9 219.8L199.9 220.0" stroke="#5a0ad2" stroke-width="1.6"></path>
<path d="M250.6 246.6L250.0 248.0" stroke="#5a0ad2" stroke-width="2.4"></path>
<path d="M259.7 168.8L261.2 170.5" stroke="#5a0ad2" stroke-width="2.0"></path>
<path d="M158.9 252.6L161.3 252.6" stroke="#5a0ad2" stroke-width="2.2"></path>
<path d="M244.5 185.5L245.3 185.9" stroke="#5a0ad2" stroke-width="1.4"></path>
<path d="M249.6 199.4L250.4 200.1" stroke="#5a0ad2" stroke-width="1.7"></path>
<path d="M228.6 251.5L228.2 251.8" stroke="#5a0ad2" stroke-width="1.4"></path>
<path d="M234.8 185.5L234.7 186.2" stroke="#5a0ad2" stroke-width="1.7"></path>
<path d="M232.2 182.6L231.1 183.2" stroke="#5a0ad2" stroke-width="1.5"></path>
<path d="M266.8 217.6L266.0 219.6" stroke="#5a0ad2" stroke-width="1.8"></path>
<path d="M253.6 187.9L253.2 188.3" stroke="#5a0ad2" stroke-width="1.4"></path>
<path d="M194.4 218.0L193.6 218.1" stroke="#5a0ad2" stroke-width="2.0"></path>
<path d="M255.9 243.3L256.9 244.3" stroke="#5a0ad2" stroke-width="2.3"></path>
<path d="M234.8 187.9L235.1 189.0" stroke="#5a0ad2" stroke-width="2.2"></path>
<path d="M264.0 217.6L261.7 218.7" stroke="#5a0ad2" stroke-width="2.3"></path>
<path d="M272.1 203.7L270.4 205.6" stroke="#5a0ad2" stroke-width="2.4"></path>
<path d="M266.9 242.3L267.3 242.9" stroke="#5a0ad2" stroke-width="1.4"></path>
<path d="M193.9 225.1L194.1 226.3" stroke="#5a0ad2" stroke-width="2.0"></path>
<path d="M171.3 255.5L169.0 255.5" stroke="#5a0ad2" stroke-width="1.9"></path>
<path d="M260.7 187.4L259.7 187.5" stroke="#5a0ad2" stroke-width="2.4"></path>
<path d="M242.4 249.9L242.6 252.1" stroke="#5a0ad2" stroke-width="1.8"></path>
<path d="M252.5 201.6L251.3 202.5" stroke="#5a0ad2" stroke-width="1.5"></path>
<ellipse cx="30.5" cy="99.2" rx="3.5" ry="1.300" fill="#b00890"></ellipse>
<ellipse cx="30.5" cy="99.2" rx="1.8" ry="0.900" fill="#e62a30"></ellipse>
<ellipse cx="181.7" cy="81.4" rx="3.5" ry="1.300" fill="#b00890"></ellipse>
<ellipse cx="181.7" cy="81.4" rx="1.8" ry="0.900" fill="#e62a30"></ellipse>
<ellipse cx="233.0" cy="106.3" rx="3.5" ry="1.300" fill="#b00890"></ellipse>
<ellipse cx="233.0" cy="106.3" rx="1.8" ry="0.900" fill="#e62a30"></ellipse>
</g>
</g></svg>
<span class="t b" style="left: 51px; color: rgb(244, 135, 122); font-size: 8.8px; top: 231px; transform: scaleX(0.88);">195.79 pixels</span>
<div class="a" style="left:48px;top:242.2px;width:53px;height:1px;background:#c85a5a"></div>
<div class="a" style="left:46.2px;top:240.6px;width:4.2px;height:4.2px;background:#11b5d0"></div>
<div class="a" style="left:72.6px;top:240.6px;width:4.2px;height:4.2px;background:#11b5d0"></div>
<div class="a" style="left:99.1px;top:240.6px;width:4.2px;height:4.2px;background:#11b5d0"></div>
<span class="t" style="left: 21px; color: rgb(201, 209, 216); font-size: 8.6px; top: 513px; transform: scaleX(0.886);">FPS : 9.97</span>
<div class="btn" style="left:289px;top:521px;width:47px;height:23px"></div>
<span class="t" style="left: 294.4px; color: rgb(255, 255, 255); font-size: 8.71px; top: 529px; transform: scaleX(0.94);">Edit Chart</span>
<div class="a" style="left:340.7px;top:521.6px;width:63.4px;height:23px;border-radius:3px;background:#f96b1d"></div>
<span class="t b" style="left: 347.5px; color: rgb(255, 255, 255); font-size: 9.98px; top: 529px; transform: scaleX(0.9);">Crop Image</span>
<!-- tools -->
<div class="btn" style="left:355.3px;top:215px;width:23.3px;height:23.6px"></div>
<div class="btn" style="left:380.2px;top:215px;width:23.8px;height:23.6px"></div>
<svg style="left:355px;top:239px" width="49" height="5" viewBox="0 0 49 5"><rect x="0" y="1.500" width="49" height="1.800" fill="#909ba6"></rect></svg>
<div class="btn" style="left:366px;top:244.00px;width:28px;height:22.6px"></div>
<div class="btn" style="left:366px;top:266.25px;width:28px;height:22.6px"></div>
<div class="btn" style="left:366px;top:288.50px;width:28px;height:22.6px"></div>
<div class="btn" style="left:366px;top:310.75px;width:28px;height:22.6px"></div>
<div class="btn" style="left:366px;top:333.00px;width:28px;height:22.6px"></div>
<div class="btn" style="left:366px;top:355.25px;width:28px;height:22.6px"></div>
<div class="btn" style="left:366px;top:377.50px;width:28px;height:22.6px"></div>
<div class="btn" style="left:366px;top:399.75px;width:28px;height:22.6px"></div>
<svg style="left:359px;top:219.500px" width="15.6" height="15.6" viewBox="0 0 24 24"><path fill="#fff" d="M3 17.25V21h3.750L17.81 9.940l-3.750-3.750L3 17.250zM20.710 7.040a.996.996 0 0 0 0-1.410l-2.340-2.340a.996.996 0 0 0-1.410 0l-1.830 1.830 3.750 3.750 1.830-1.830z" transform="translate(12 12) scale(1.18) translate(-12 -12)"></path></svg>
<svg style="left:384.500px;top:219.800px" width="15.500" height="15" viewBox="0 0 15.500 15"><g fill="none" stroke="#fff" stroke-width="1.3"><circle cx="3.300" cy="3.500" r="2.300"></circle><circle cx="3.300" cy="11.300" r="2.300"></circle><path d="M5 5L14.500 13.600M5 9.800L14.500 1.300" stroke-width="1.500"></path></g></svg>
<svg style="left:366px;top:244px" width="28" height="180" viewBox="0 0 28 180"><g fill="none" stroke="#fff" stroke-width="1.200">
<path d="M7 17L19.600 5.600"></path>
<path d="M7 28.800C9 26.300 14 26 15.300 29C16.500 32 11 33 9.500 36.500C8.500 39.500 14 39.500 17 37C19 35.300 19.800 33.500 19.600 31.500"></path>
<rect x="7.600" y="51.700" width="12.400" height="8.800"></rect>
<circle cx="13.700" cy="100.200" r="7"></circle>
<path d="M9.300 139.600C11 138.800 14 138.800 15.200 139.800C16.200 141.500 15.500 143.500 17.500 145.500C20 147.800 20.500 150 19 152C17 153.600 11 153.600 8.800 152.500C7 151 7.500 148.500 9 146.500C10.500 144 8 141.500 9.300 139.600Z"></path>
</g><g fill="#fff">
<rect x="7.500" y="74.200" width="12.400" height="8.800"></rect>
<circle cx="13.700" cy="123.300" r="7.600"></circle>
<path d="M9.300 161.600C11 160.300 14.500 160.300 15.700 161.800C16.700 163.500 16 165.500 18 167.500C20.500 169.800 21 172.500 19.500 174.500C17.500 176.300 11 176.300 8.800 175C7 173.500 7.200 170.500 8.700 168.500C10 166 8 163.500 9.300 161.600Z"></path>
</g></svg>

<svg style="left:399px;top:85.6px" width="14" height="13" viewBox="0 0 14 13"><path d="M6 1.2H0.6V11.8H11.2V7" fill="none" stroke="#aeb4ba" stroke-width="1.1"></path><path d="M2.6 9.6L12.6 0.6M7.6 0.6H12.6V5.4" fill="none" stroke="#aeb4ba" stroke-width="1.1"></path></svg>
<div class="a" style="left:416.3px;top:312.8px;width:1.6px;height:1.6px;border-radius:50%;background:#fff"></div>
<div class="a" style="left:416.3px;top:315.6px;width:1.6px;height:1.6px;border-radius:50%;background:#fff"></div>
<div class="a" style="left:416.3px;top:318.4px;width:1.6px;height:1.6px;border-radius:50%;background:#fff"></div>

<!-- DIVIDER -->
<div class="a" style="left:415px;top:83px;width:4px;height:467px;background:#30475c"></div>
<!-- RIGHT PANEL -->
<span class="t b" style="left: 412.4px; color: rgb(241, 196, 15); font-size: 16px; top: 92px; transform: scaleX(0.876);">1</span>
<div class="a" style="left:427px;top:94px;width:586px;height:217.500px;overflow:hidden"><div class="a" style="left:8.500px;top:6px;width:571.500px;height:204.200px;background:#263545;box-shadow:0 0 4px 3px rgba(8,12,18,0.88),1px 2px 8px 5px rgba(10,15,22,0.4)"></div></div>
<svg style="left:430.400px;top:102px" width="4" height="8" viewBox="0 0 4 8"><path d="M0 0L3.600 3.500L0 7Z" fill="#4a5763"></path></svg>
<div class="a dk" style="left:437px;top:101px;width:427.5px;height:23px;border:1px solid #7f8b96;border-radius:3px"></div>
<span class="t" style="left: 443.5px; color: rgb(170, 180, 189); font-size: 9.88px; top: 108px; transform: scaleX(0.94);">Sequence 1</span>
<div class="btn" style="left:868.5px;top:101px;width:43.5px;height:23px"></div>
<span class="t" style="left: 878.2px; color: rgb(255, 255, 255); font-size: 8.83px; top: 109px; transform: scaleX(0.94);">Config</span>
<div class="btn" style="left:915.5px;top:101px;width:43.3px;height:23px"></div>
<span class="t" style="left: 930px; color: rgb(255, 255, 255); font-size: 8.97px; top: 109px; transform: scaleX(0.94);">Add</span>
<div class="btn" style="left:962.4px;top:101px;width:43.4px;height:23px"></div>
<span class="t" style="left: 968px; color: rgb(255, 255, 255); font-size: 8.87px; top: 109px; transform: scaleX(0.94);">Show All</span>
<div class="a" style="left:435.5px;top:134.00px;width:571.2px;height:41.5px;background:#30475c"></div>
<svg style="left:456px;top:148.20px" width="15" height="15" viewBox="0 0 15 15"><circle cx="7.3" cy="7.3" r="6.4" fill="none" stroke="#dfe4e8" stroke-width="1"></circle><path d="M4.3 7.6L6.5 9.7L10.4 5.3" fill="none" stroke="#dfe4e8" stroke-width="1.1"></path></svg>
<span class="t" style="left: 483.8px; color: rgb(230, 234, 238); font-size: 12.5px; top: 150px; transform: scaleX(0.959);">1.</span>
<span class="t" style="left: 500.8px; color: rgb(223, 228, 232); font-size: 11.58px; top: 151px; transform: scaleX(0.94);">Time</span>
<div class="a" style="left:867.2px;top:149.00px;width:11.6px;height:11.6px;border-radius:50%;background:#ea6262"></div>
<span class="t" style="left: 899.1px; color: rgb(255, 255, 255); font-size: 10.9px; top: 151px; transform: scaleX(1.155);">0</span>
<svg style="left:925px;top:147.60px" width="15" height="15" viewBox="0 0 24 24"><path fill="#7d8a96" d="M3 17.25V21h3.750L17.81 9.94l-3.75-3.75L3 17.250zM20.71 7.04a.996.996 0 0 0 0-1.410l-2.340-2.340a.996.996 0 0 0-1.410 0l-1.830 1.830 3.750 3.750 1.830-1.830z" transform="translate(12 12) scale(1.25) translate(-12 -12)"></path></svg>
<svg style="left:958.5px;top:147.70px" width="15" height="15" viewBox="0 0 15 15"><path fill="#fff" d="M7.5 0.3L10 3.2H8.2V6.800H11.800V5L14.700 7.500L11.800 10V8.200H8.200V11.800H10L7.500 14.700L5 11.800H6.800V8.200H3.200V10L0.300 7.500L3.200 5V6.800H6.800V3.200H5Z"></path></svg>
<div class="a" style="left:435.5px;top:176.75px;width:571.2px;height:41.5px;background:#30475c"></div>
<svg style="left:456px;top:190.95px" width="15" height="15" viewBox="0 0 15 15"><circle cx="7.3" cy="7.3" r="6.4" fill="none" stroke="#dfe4e8" stroke-width="1"></circle><path d="M4.3 7.6L6.5 9.7L10.4 5.3" fill="none" stroke="#dfe4e8" stroke-width="1.1"></path></svg>
<span class="t" style="left: 483.8px; color: rgb(230, 234, 238); font-size: 12.5px; top: 193px; transform: scaleX(0.959);">2.</span>
<span class="t" style="left: 500.8px; color: rgb(223, 228, 232); font-size: 11.75px; top: 193px; transform: scaleX(0.94);">Tiling</span>
<div class="a" style="left:867.2px;top:191.75px;width:11.6px;height:11.6px;border-radius:50%;background:#ea6262"></div>
<span class="t" style="left: 899.1px; color: rgb(255, 255, 255); font-size: 10.9px; top: 193px; transform: scaleX(1.155);">0</span>
<svg style="left:925px;top:190.35px" width="15" height="15" viewBox="0 0 24 24"><path fill="#7d8a96" d="M3 17.25V21h3.750L17.81 9.94l-3.75-3.75L3 17.250zM20.71 7.04a.996.996 0 0 0 0-1.410l-2.340-2.340a.996.996 0 0 0-1.410 0l-1.830 1.830 3.750 3.750 1.830-1.830z" transform="translate(12 12) scale(1.25) translate(-12 -12)"></path></svg>
<svg style="left:958.5px;top:190.45px" width="15" height="15" viewBox="0 0 15 15"><path fill="#fff" d="M7.5 0.3L10 3.2H8.2V6.800H11.800V5L14.700 7.500L11.800 10V8.200H8.200V11.800H10L7.500 14.700L5 11.800H6.800V8.200H3.200V10L0.300 7.500L3.200 5V6.800H6.800V3.200H5Z"></path></svg>
<div class="a" style="left:435.5px;top:219.50px;width:571.2px;height:41.5px;background:#30475c"></div>
<svg style="left:456px;top:233.70px" width="15" height="15" viewBox="0 0 15 15"><circle cx="7.3" cy="7.3" r="6.4" fill="none" stroke="#dfe4e8" stroke-width="1"></circle><path d="M4.3 7.6L6.5 9.7L10.4 5.3" fill="none" stroke="#dfe4e8" stroke-width="1.1"></path></svg>
<span class="t" style="left: 483.8px; color: rgb(230, 234, 238); font-size: 12.5px; top: 236px; transform: scaleX(0.959);">3.</span>
<span class="t" style="left: 500.8px; color: rgb(223, 228, 232); font-size: 11.12px; top: 237px; transform: scaleX(0.94);">Z-Stack</span>
<div class="a" style="left:867.2px;top:234.50px;width:11.6px;height:11.6px;border-radius:50%;background:#ea6262"></div>
<span class="t" style="left: 899.1px; color: rgb(255, 255, 255); font-size: 10.9px; top: 236px; transform: scaleX(1.155);">0</span>
<svg style="left:925px;top:233.10px" width="15" height="15" viewBox="0 0 24 24"><path fill="#7d8a96" d="M3 17.25V21h3.750L17.81 9.94l-3.75-3.75L3 17.250zM20.71 7.04a.996.996 0 0 0 0-1.410l-2.340-2.340a.996.996 0 0 0-1.410 0l-1.830 1.830 3.750 3.750 1.830-1.830z" transform="translate(12 12) scale(1.25) translate(-12 -12)"></path></svg>
<svg style="left:958.5px;top:233.20px" width="15" height="15" viewBox="0 0 15 15"><path fill="#fff" d="M7.5 0.3L10 3.2H8.2V6.800H11.800V5L14.700 7.500L11.800 10V8.200H8.200V11.800H10L7.500 14.700L5 11.800H6.800V8.200H3.200V10L0.300 7.500L3.200 5V6.800H6.800V3.200H5Z"></path></svg>
<div class="a" style="left:435.5px;top:262.25px;width:571.2px;height:41.5px;background:#30475c"></div>
<svg style="left:456px;top:276.45px" width="15" height="15" viewBox="0 0 15 15"><circle cx="7.3" cy="7.3" r="6.4" fill="none" stroke="#dfe4e8" stroke-width="1"></circle><path d="M4.3 7.6L6.5 9.7L10.4 5.3" fill="none" stroke="#dfe4e8" stroke-width="1.1"></path></svg>
<span class="t" style="left: 483.8px; color: rgb(230, 234, 238); font-size: 12.5px; top: 278px; transform: scaleX(0.959);">4.</span>
<span class="t" style="left: 500.8px; color: rgb(223, 228, 232); font-size: 11.53px; top: 279px; transform: scaleX(0.94);">Multi-Channels</span>
<div class="a" style="left:867.2px;top:277.25px;width:11.6px;height:11.6px;border-radius:50%;background:#ea6262"></div>
<span class="t" style="left: 899.1px; color: rgb(255, 255, 255); font-size: 10.9px; top: 279px; transform: scaleX(1.155);">0</span>
<svg style="left:925px;top:275.85px" width="15" height="15" viewBox="0 0 24 24"><path fill="#7d8a96" d="M3 17.25V21h3.750L17.81 9.94l-3.75-3.75L3 17.250zM20.71 7.04a.996.996 0 0 0 0-1.410l-2.340-2.340a.996.996 0 0 0-1.410 0l-1.830 1.830 3.750 3.750 1.830-1.830z" transform="translate(12 12) scale(1.25) translate(-12 -12)"></path></svg>
<svg style="left:958.5px;top:275.95px" width="15" height="15" viewBox="0 0 15 15"><path fill="#fff" d="M7.5 0.3L10 3.2H8.2V6.800H11.800V5L14.700 7.500L11.800 10V8.200H8.200V11.800H10L7.500 14.700L5 11.800H6.800V8.200H3.200V10L0.300 7.500L3.200 5V6.800H6.800V3.200H5Z"></path></svg>
<div class="btn" style="left:540px;top:187px;width:79px;height:22px"></div>
<span class="t" style="left: 545.4px; color: rgb(255, 255, 255); font-size: 8.62px; top: 194px; transform: scaleX(0.94);">Switch to Positions</span>
<svg style="left:698px;top:322px" width="48" height="18" viewBox="0 0 48 18"><path d="M11.3 2.200L1.600 8.600L11.300 15M35.400 2.200L45.200 8.600L35.400 15" fill="none" stroke="#8591a0" stroke-width="1.5"></path></svg>
<div class="a" style="left:713px;top:323px;width:16px;height:16px;background:#f96b1d"></div>
<span class="t" style="left: 718.8px; color: rgb(255, 255, 255); font-size: 8.5px; top: 327px; transform: scaleX(0.931);">1</span>
<span class="t" style="left: 408.2px; color: rgb(241, 196, 15); font-size: 16px; top: 350px; transform: scaleX(1.034);">2</span>
<span class="t" style="left: 430px; color: rgb(213, 219, 224); font-size: 9.91px; top: 363px; transform: scaleX(0.94);">Data Processing and Charts</span>
<div class="a dk" style="left:551.6px;top:356px;width:96px;height:22px;border:1px solid #6b7986;border-radius:3px"></div>
<svg style="left:629px;top:364px" width="12" height="8" viewBox="0 0 12 8"><path d="M1 1.600L5.600 5.800L10.200 1.600" fill="none" stroke="#fff" stroke-width="1.2"></path></svg>
<div class="btn" style="left:653px;top:356px;width:68px;height:22px;border-color:#465664"></div>
<span class="t" style="left: 658.2px; color: rgb(125, 138, 150); font-size: 8.5px; top: 363px; transform: scaleX(0.94);">Edit Parameters</span>
<span class="t" style="left: 408.2px; color: rgb(241, 196, 15); font-size: 16px; top: 388px; transform: scaleX(1.034);">3</span>
<div class="a" style="left:425px;top:388px;width:451px;height:124.500px;background:#293b4d"></div>
<div class="a dk" style="left:430px;top:388.800px;width:440.500px;height:120.200px"></div>
<span class="t b" style="left: 456.4px; color: rgb(255, 255, 255); font-size: 11.25px; top: 402px; transform: scaleX(0.88);">Save Acquisition</span>
<div class="a" style="left:457px;top:422.6px;width:12px;height:12px;border-radius:50%;border:1px solid #dfe4e8"></div>
<div class="a" style="left:459.8px;top:425.4px;width:6.4px;height:6.400px;border-radius:50%;background:#fff"></div>
<span class="t" style="left: 472.4px; color: rgb(230, 234, 238); font-size: 10.38px; top: 424px; transform: scaleX(0.94);">in RAM</span>
<div class="a" style="left:526px;top:422.6px;width:12px;height:12px;border-radius:50%;border:1px solid #77838e"></div>
<span class="t" style="left: 541.7px; color: rgb(230, 234, 238); font-size: 10.52px; top: 423px; transform: scaleX(0.94);">on Disk</span>
<div class="btn" style="left:456.8px;top:443.3px;width:133px;height:22.7px;border-color:#33424f"></div>
<span class="t" style="left: 463.2px; color: rgb(37, 51, 62); font-size: 10.19px; top: 450px; transform: scaleX(0.94);">Choose Directory</span>
<div class="btn" style="left:590.6px;top:443.3px;width:22.6px;height:22.7px;border-color:#465664"></div>
<span class="t" style="left: 598.4px; color: rgb(135, 148, 160); font-size: 8.93px; top: 452px; transform: scaleX(0.94);">...</span>
<span class="t" style="left: 623.6px; color: rgb(170, 180, 189); font-size: 10.28px; top: 451px; transform: scaleX(0.94);">Format</span>
<div class="btn" style="left:658.8px;top:443.6px;width:95.8px;height:22.5px;border-color:#3d4c59"></div>
<span class="t" style="left: 663.6px; color: rgb(55, 70, 79); font-size: 10.3px; top: 451px; transform: scaleX(0.94);">All in One</span>
<svg style="left:736px;top:452px" width="12" height="8" viewBox="0 0 12 8"><path d="M1 1.600L5.600 5.600L10.200 1.600" fill="none" stroke="#8591a0" stroke-width="1.2"></path></svg>
<div class="a" style="left:765px;top:449.3px;width:12px;height:12px;border:1px solid #6b7986;border-radius:2px"></div>
<span class="t" style="left: 781.4px; color: rgb(119, 131, 142); font-size: 9.95px; top: 450px; transform: scaleX(0.94);">Save as BigTiff</span>
<span class="t" style="left: 881.5px; color: rgb(241, 196, 15); font-size: 16px; top: 366px; transform: scaleX(1.079);">4</span>
<div class="a" style="left:880px;top:388px;width:137.500px;height:124.500px;background:#293b4d"></div>
<div class="a dk" style="left:883.700px;top:388.800px;width:128.500px;height:120.200px"></div>
<span class="t" style="left: 905.4px; color: rgb(213, 219, 224); font-size: 10.38px; top: 405px; transform: scaleX(0.94);">Total images</span>
<span class="t b" style="left: 984.2px; color: rgb(255, 255, 255); font-size: 10.6px; top: 404px; transform: scaleX(1.119);">0</span>
<span class="t" style="left: 905.4px; color: rgb(213, 219, 224); font-size: 10.13px; top: 421px; transform: scaleX(0.94);">Total size</span>
<span class="t b" style="left: 978px; color: rgb(255, 255, 255); font-size: 10.6px; top: 420px; transform: scaleX(0.958);">0B</span>
<span class="t" style="left: 905.4px; color: rgb(213, 219, 224); font-size: 10.66px; top: 436px; transform: scaleX(0.94);">Minimal duration</span>
<span class="t" style="left: 905.4px; color: rgb(102, 116, 127); font-size: 10.5px; top: 451px; transform: scaleX(0.94);"><b style="color:#fff;font-weight:400">00</b>h<b style="color:#fff;font-weight:400">00</b>min<b style="color:#fff;font-weight:400">00</b>s<b style="color:#fff;font-weight:400">00</b>ms</span>
<div class="a" style="left:906px;top:471px;width:85.3px;height:22.6px;border-radius:3px;background:#f96b1d"></div>
<span class="t b" style="left: 912.6px; color: rgb(255, 255, 255); font-size: 10.17px; top: 478px; transform: scaleX(0.88);">Start Acquisition</span>

<svg style="left:0;top:0;pointer-events:none" width="1024" height="550" viewBox="0 0 1024 550"><g fill="none" stroke="#d9b81e" stroke-width="1.400">
<rect x="426.550" y="93.600" width="587.400" height="218.600" stroke-width="1.600"></rect>
<rect x="424.950" y="350.250" width="450.800" height="32.700" stroke-width="1.500"></rect>
<rect x="424.950" y="387.750" width="450.800" height="124.900"></rect>
<rect x="879.850" y="387.750" width="137.500" height="125"></rect>
</g></svg>
<div class="a" style="left:1022px;top:1px;width:1px;height:548px;background:#223040"></div>
<div class="a" style="left:1023px;top:0;width:1px;height:550px;background:#9ca5ad"></div>
<div class="a" style="left:0;top:548px;width:1023px;height:1px;background:#202d3a"></div>
<div class="a" style="left:0;top:549px;width:1024px;height:1px;background:#9ca5ad"></div>

</body></html>
